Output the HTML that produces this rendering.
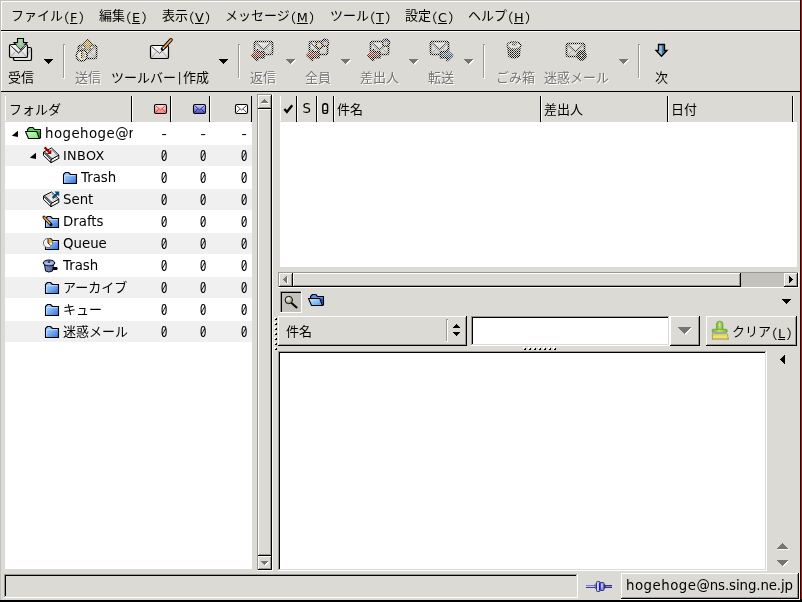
<!DOCTYPE html>
<html lang="ja"><head><meta charset="utf-8"><title>Sylpheed</title>
<style>
html,body{margin:0;padding:0;}
body{width:802px;height:602px;position:relative;overflow:hidden;background:#dcdad5;font-family:"DejaVu Sans","Liberation Sans","Noto Sans CJK JP",sans-serif;font-size:12.8px;letter-spacing:.35px;color:#000;}
#w{position:absolute;left:0;top:0;width:802px;height:602px;will-change:transform;}
.a{position:absolute;}
.t{position:absolute;white-space:nowrap;line-height:18px;height:18px;}
.j{font-family:"Noto Sans CJK JP","IPAGothic",sans-serif;font-size:13px;letter-spacing:0;}
.p{font-family:"IPAGothic","Noto Sans CJK JP",sans-serif;font-size:13.6px;letter-spacing:0;display:inline-block;width:7px;text-align:center;position:relative;top:2.5px;}
.q{padding-left:.8px;width:6.2px;}
.b{font-family:"IPAGothic","Noto Sans CJK JP",sans-serif;font-size:12.5px;letter-spacing:0;display:inline-block;width:7px;text-align:center;position:relative;top:1px;}
.k{position:relative;top:2px;letter-spacing:0;}
.lc{font-size:13.33px;letter-spacing:0;}
.z{font-family:"WenQuanYi Zen Hei Mono","IPAGothic","DejaVu Sans Mono",monospace;font-size:13.5px;letter-spacing:0;}
.dis{color:#757575;text-shadow:1px 1px 0 #fff;}
u{text-decoration:underline;text-underline-offset:1px;}
svg{position:absolute;left:0;top:0;overflow:visible;}
</style></head><body><div id="w">
<div class="a" style="left:0px;top:0px;width:800px;height:1px;background:#c0c0c0;"></div>
<div class="a" style="left:0px;top:0px;width:1px;height:600px;background:#c0c0c0;"></div>
<div class="a" style="left:1px;top:1px;width:799px;height:1px;background:#ffffff;"></div>
<div class="a" style="left:1px;top:1px;width:1px;height:90px;background:#ffffff;"></div>
<div class="a" style="left:800px;top:0px;width:1px;height:602px;background:#000000;"></div>
<div class="a" style="left:801px;top:0px;width:1px;height:599px;background:#e00000;"></div>
<div class="a" style="left:0px;top:600px;width:802px;height:2px;background:#000000;"></div>
<div class="a" style="left:801px;top:599px;width:1px;height:3px;background:#000000;"></div>
<div class="a" style="left:1px;top:30px;width:799px;height:1px;background:#000000;"></div>
<div class="a" style="left:1px;top:31px;width:799px;height:1px;background:#ffffff;"></div>
<div class="t " style="left:11px;top:6px;"><span class="j">ファイル</span><span class="p">(</span><u class="k">F</u><span class="p q">)</span></div>
<div class="t " style="left:99px;top:6px;"><span class="j">編集</span><span class="p">(</span><u class="k">E</u><span class="p q">)</span></div>
<div class="t " style="left:162px;top:6px;"><span class="j">表示</span><span class="p">(</span><u class="k">V</u><span class="p q">)</span></div>
<div class="t " style="left:225px;top:6px;"><span class="j">メッセージ</span><span class="p">(</span><u class="k">M</u><span class="p q">)</span></div>
<div class="t " style="left:330px;top:6px;"><span class="j">ツール</span><span class="p">(</span><u class="k">T</u><span class="p q">)</span></div>
<div class="t " style="left:405px;top:6px;"><span class="j">設定</span><span class="p">(</span><u class="k">C</u><span class="p q">)</span></div>
<div class="t " style="left:468px;top:6px;"><span class="j">ヘルプ</span><span class="p">(</span><u class="k">H</u><span class="p q">)</span></div>
<div class="a" style="left:1px;top:91px;width:799px;height:1px;background:#000000;"></div>
<div class="t " style="left:8px;top:68px;"><span class="j">受信</span></div>
<div class="t dis" style="left:75px;top:68px;"><span class="j">送信</span></div>
<div class="t " style="left:111px;top:68px;"><span class="j">ツールバー</span><span class="b">|</span><span class="j">作成</span></div>
<div class="t dis" style="left:250px;top:68px;"><span class="j">返信</span></div>
<div class="t dis" style="left:305px;top:68px;"><span class="j">全員</span></div>
<div class="t dis" style="left:360px;top:68px;"><span class="j">差出人</span></div>
<div class="t dis" style="left:428px;top:68px;"><span class="j">転送</span></div>
<div class="t dis" style="left:496px;top:68px;"><span class="j">ごみ箱</span></div>
<div class="t dis" style="left:544px;top:68px;"><span class="j">迷惑メール</span></div>
<div class="t " style="left:655px;top:68px;"><span class="j">次</span></div>
<div class="a" style="left:63px;top:44px;width:1px;height:34px;background:#9a9890;"></div>
<div class="a" style="left:64px;top:44px;width:1px;height:1px;background:#9a9890;"></div>
<div class="a" style="left:64px;top:45px;width:1px;height:34px;background:#ffffff;"></div>
<div class="a" style="left:63px;top:78px;width:1px;height:1px;background:#ffffff;"></div>
<div class="a" style="left:238px;top:44px;width:1px;height:34px;background:#9a9890;"></div>
<div class="a" style="left:239px;top:44px;width:1px;height:1px;background:#9a9890;"></div>
<div class="a" style="left:239px;top:45px;width:1px;height:34px;background:#ffffff;"></div>
<div class="a" style="left:238px;top:78px;width:1px;height:1px;background:#ffffff;"></div>
<div class="a" style="left:483px;top:44px;width:1px;height:34px;background:#9a9890;"></div>
<div class="a" style="left:484px;top:44px;width:1px;height:1px;background:#9a9890;"></div>
<div class="a" style="left:484px;top:45px;width:1px;height:34px;background:#ffffff;"></div>
<div class="a" style="left:483px;top:78px;width:1px;height:1px;background:#ffffff;"></div>
<div class="a" style="left:638px;top:44px;width:1px;height:34px;background:#9a9890;"></div>
<div class="a" style="left:639px;top:44px;width:1px;height:1px;background:#9a9890;"></div>
<div class="a" style="left:639px;top:45px;width:1px;height:34px;background:#ffffff;"></div>
<div class="a" style="left:638px;top:78px;width:1px;height:1px;background:#ffffff;"></div>
<div class="a" style="left:5px;top:122px;width:247px;height:447px;background:#ffffff;"></div>
<div class="a" style="left:5px;top:96px;width:1px;height:25px;background:#ffffff;"></div>
<div class="a" style="left:131px;top:96px;width:1px;height:26px;background:#000000;"></div>
<div class="a" style="left:132px;top:96px;width:1px;height:25px;background:#ffffff;"></div>
<div class="a" style="left:170px;top:96px;width:1px;height:26px;background:#000000;"></div>
<div class="a" style="left:171px;top:96px;width:1px;height:25px;background:#ffffff;"></div>
<div class="a" style="left:209px;top:96px;width:1px;height:26px;background:#000000;"></div>
<div class="a" style="left:210px;top:96px;width:1px;height:25px;background:#ffffff;"></div>
<div class="a" style="left:251px;top:96px;width:1px;height:26px;background:#000000;"></div>
<div class="t " style="left:9px;top:99.5px;"><span class="j">フォルダ</span></div>

<div class="t " style="left:45px;top:125px;max-width:88px;overflow:hidden"><span class="lc"><span style="letter-spacing:.45px">hogehoge</span>@r</span></div>
<div class="t z" style="left:147.6px;top:125.6px;width:20px;text-align:right">-</div>
<div class="t z" style="left:186.6px;top:125.6px;width:20px;text-align:right">-</div>
<div class="t z" style="left:227.6px;top:125.6px;width:20px;text-align:right">-</div>
<div class="a" style="left:5px;top:145px;width:247px;height:21px;background:#f0f0f0;"></div>

<div class="t " style="left:63px;top:147px;max-width:70px;overflow:hidden">INBOX</div>
<div class="t z" style="left:147.6px;top:147.6px;width:20px;text-align:right">0</div>
<div class="t z" style="left:186.6px;top:147.6px;width:20px;text-align:right">0</div>
<div class="t z" style="left:227.6px;top:147.6px;width:20px;text-align:right">0</div>

<div class="t " style="left:81px;top:169px;max-width:52px;overflow:hidden"><span class="lc">Trash</span></div>
<div class="t z" style="left:147.6px;top:169.6px;width:20px;text-align:right">0</div>
<div class="t z" style="left:186.6px;top:169.6px;width:20px;text-align:right">0</div>
<div class="t z" style="left:227.6px;top:169.6px;width:20px;text-align:right">0</div>
<div class="a" style="left:5px;top:189px;width:247px;height:21px;background:#f0f0f0;"></div>

<div class="t " style="left:63px;top:191px;max-width:70px;overflow:hidden"><span class="lc">Sent</span></div>
<div class="t z" style="left:147.6px;top:191.6px;width:20px;text-align:right">0</div>
<div class="t z" style="left:186.6px;top:191.6px;width:20px;text-align:right">0</div>
<div class="t z" style="left:227.6px;top:191.6px;width:20px;text-align:right">0</div>

<div class="t " style="left:63px;top:213px;max-width:70px;overflow:hidden"><span class="lc">Drafts</span></div>
<div class="t z" style="left:147.6px;top:213.6px;width:20px;text-align:right">0</div>
<div class="t z" style="left:186.6px;top:213.6px;width:20px;text-align:right">0</div>
<div class="t z" style="left:227.6px;top:213.6px;width:20px;text-align:right">0</div>
<div class="a" style="left:5px;top:233px;width:247px;height:21px;background:#f0f0f0;"></div>

<div class="t " style="left:63px;top:235px;max-width:70px;overflow:hidden"><span class="lc">Queue</span></div>
<div class="t z" style="left:147.6px;top:235.6px;width:20px;text-align:right">0</div>
<div class="t z" style="left:186.6px;top:235.6px;width:20px;text-align:right">0</div>
<div class="t z" style="left:227.6px;top:235.6px;width:20px;text-align:right">0</div>

<div class="t " style="left:63px;top:257px;max-width:70px;overflow:hidden"><span class="lc">Trash</span></div>
<div class="t z" style="left:147.6px;top:257.6px;width:20px;text-align:right">0</div>
<div class="t z" style="left:186.6px;top:257.6px;width:20px;text-align:right">0</div>
<div class="t z" style="left:227.6px;top:257.6px;width:20px;text-align:right">0</div>
<div class="a" style="left:5px;top:277px;width:247px;height:21px;background:#f0f0f0;"></div>

<div class="t " style="left:63px;top:278px;max-width:70px;overflow:hidden"><span class="j">アーカイブ</span></div>
<div class="t z" style="left:147.6px;top:279.6px;width:20px;text-align:right">0</div>
<div class="t z" style="left:186.6px;top:279.6px;width:20px;text-align:right">0</div>
<div class="t z" style="left:227.6px;top:279.6px;width:20px;text-align:right">0</div>

<div class="t " style="left:63px;top:300px;max-width:70px;overflow:hidden"><span class="j">キュー</span></div>
<div class="t z" style="left:147.6px;top:301.6px;width:20px;text-align:right">0</div>
<div class="t z" style="left:186.6px;top:301.6px;width:20px;text-align:right">0</div>
<div class="t z" style="left:227.6px;top:301.6px;width:20px;text-align:right">0</div>
<div class="a" style="left:5px;top:321px;width:247px;height:21px;background:#f0f0f0;"></div>

<div class="t " style="left:63px;top:322px;max-width:70px;overflow:hidden"><span class="j">迷惑メール</span></div>
<div class="t z" style="left:147.6px;top:323.6px;width:20px;text-align:right">0</div>
<div class="t z" style="left:186.6px;top:323.6px;width:20px;text-align:right">0</div>
<div class="t z" style="left:227.6px;top:323.6px;width:20px;text-align:right">0</div>
<div class="a" style="left:257px;top:94px;width:16px;height:477px;background:#c4c2bd;"></div>
<div class="a" style="left:257px;top:94px;width:16px;height:1px;background:#9a9890;"></div>
<div class="a" style="left:257px;top:94px;width:1px;height:477px;background:#9a9890;"></div>
<div class="a" style="left:272px;top:94px;width:1px;height:477px;background:#ffffff;"></div>
<div class="a" style="left:257px;top:570px;width:16px;height:1px;background:#ffffff;"></div>
<div class="a" style="left:258px;top:95px;width:14px;height:14px;background:#dcdad5;"></div>
<div class="a" style="left:258px;top:95px;width:14px;height:1px;background:#ffffff;"></div>
<div class="a" style="left:258px;top:95px;width:1px;height:14px;background:#ffffff;"></div>
<div class="a" style="left:259px;top:107px;width:12px;height:1px;background:#9a9890;"></div>
<div class="a" style="left:270px;top:96px;width:1px;height:12px;background:#9a9890;"></div>
<div class="a" style="left:258px;top:108px;width:14px;height:1px;background:#000000;"></div>
<div class="a" style="left:271px;top:95px;width:1px;height:14px;background:#000000;"></div>
<div class="a" style="left:258px;top:556px;width:14px;height:14px;background:#dcdad5;"></div>
<div class="a" style="left:258px;top:556px;width:14px;height:1px;background:#ffffff;"></div>
<div class="a" style="left:258px;top:556px;width:1px;height:14px;background:#ffffff;"></div>
<div class="a" style="left:259px;top:568px;width:12px;height:1px;background:#9a9890;"></div>
<div class="a" style="left:270px;top:557px;width:1px;height:12px;background:#9a9890;"></div>
<div class="a" style="left:258px;top:569px;width:14px;height:1px;background:#000000;"></div>
<div class="a" style="left:271px;top:556px;width:1px;height:14px;background:#000000;"></div>
<div class="a" style="left:258px;top:109px;width:14px;height:447px;background:#dcdad5;"></div>
<div class="a" style="left:258px;top:109px;width:14px;height:1px;background:#ffffff;"></div>
<div class="a" style="left:258px;top:109px;width:1px;height:447px;background:#ffffff;"></div>
<div class="a" style="left:259px;top:554px;width:12px;height:1px;background:#9a9890;"></div>
<div class="a" style="left:270px;top:110px;width:1px;height:445px;background:#9a9890;"></div>
<div class="a" style="left:258px;top:555px;width:14px;height:1px;background:#000000;"></div>
<div class="a" style="left:271px;top:109px;width:1px;height:447px;background:#000000;"></div>
<div class="a" style="left:280px;top:122px;width:517px;height:145px;background:#ffffff;"></div>
<div class="a" style="left:280px;top:96px;width:1px;height:25px;background:#ffffff;"></div>
<div class="a" style="left:296px;top:96px;width:1px;height:26px;background:#000000;"></div>
<div class="a" style="left:297px;top:96px;width:1px;height:25px;background:#ffffff;"></div>
<div class="a" style="left:316px;top:96px;width:1px;height:26px;background:#000000;"></div>
<div class="a" style="left:317px;top:96px;width:1px;height:25px;background:#ffffff;"></div>
<div class="a" style="left:333px;top:96px;width:1px;height:26px;background:#000000;"></div>
<div class="a" style="left:334px;top:96px;width:1px;height:25px;background:#ffffff;"></div>
<div class="a" style="left:540px;top:96px;width:1px;height:26px;background:#000000;"></div>
<div class="a" style="left:541px;top:96px;width:1px;height:25px;background:#ffffff;"></div>
<div class="a" style="left:667px;top:96px;width:1px;height:26px;background:#000000;"></div>
<div class="a" style="left:668px;top:96px;width:1px;height:25px;background:#ffffff;"></div>
<div class="a" style="left:792px;top:96px;width:1px;height:26px;background:#000000;"></div>
<div class="a" style="left:793px;top:96px;width:1px;height:25px;background:#ffffff;"></div>
<div class="t " style="left:302.4px;top:99.7px;"><span class="lc">S</span></div>
<div class="t " style="left:337px;top:100px;"><span class="j">件名</span></div>
<div class="t " style="left:544px;top:100px;"><span class="j">差出人</span></div>
<div class="t " style="left:671px;top:100px;"><span class="j">日付</span></div>
<div class="a" style="left:278px;top:272px;width:521px;height:16px;background:#c4c2bd;"></div>
<div class="a" style="left:278px;top:272px;width:521px;height:1px;background:#9a9890;"></div>
<div class="a" style="left:278px;top:272px;width:1px;height:16px;background:#9a9890;"></div>
<div class="a" style="left:278px;top:287px;width:521px;height:1px;background:#ffffff;"></div>
<div class="a" style="left:798px;top:272px;width:1px;height:16px;background:#ffffff;"></div>
<div class="a" style="left:279px;top:273px;width:14px;height:14px;background:#dcdad5;"></div>
<div class="a" style="left:279px;top:273px;width:14px;height:1px;background:#ffffff;"></div>
<div class="a" style="left:279px;top:273px;width:1px;height:14px;background:#ffffff;"></div>
<div class="a" style="left:280px;top:285px;width:12px;height:1px;background:#9a9890;"></div>
<div class="a" style="left:291px;top:274px;width:1px;height:12px;background:#9a9890;"></div>
<div class="a" style="left:279px;top:286px;width:14px;height:1px;background:#000000;"></div>
<div class="a" style="left:292px;top:273px;width:1px;height:14px;background:#000000;"></div>
<div class="a" style="left:293px;top:273px;width:448px;height:14px;background:#dcdad5;"></div>
<div class="a" style="left:293px;top:273px;width:448px;height:1px;background:#ffffff;"></div>
<div class="a" style="left:293px;top:273px;width:1px;height:14px;background:#ffffff;"></div>
<div class="a" style="left:294px;top:285px;width:446px;height:1px;background:#9a9890;"></div>
<div class="a" style="left:739px;top:274px;width:1px;height:12px;background:#9a9890;"></div>
<div class="a" style="left:293px;top:286px;width:448px;height:1px;background:#000000;"></div>
<div class="a" style="left:740px;top:273px;width:1px;height:14px;background:#000000;"></div>
<div class="a" style="left:784px;top:273px;width:14px;height:14px;background:#dcdad5;"></div>
<div class="a" style="left:784px;top:273px;width:14px;height:1px;background:#ffffff;"></div>
<div class="a" style="left:784px;top:273px;width:1px;height:14px;background:#ffffff;"></div>
<div class="a" style="left:785px;top:285px;width:12px;height:1px;background:#9a9890;"></div>
<div class="a" style="left:796px;top:274px;width:1px;height:12px;background:#9a9890;"></div>
<div class="a" style="left:784px;top:286px;width:14px;height:1px;background:#000000;"></div>
<div class="a" style="left:797px;top:273px;width:1px;height:14px;background:#000000;"></div>
<div class="a" style="left:280px;top:291px;width:22px;height:22px;background:#c4c2bd;"></div>
<div class="a" style="left:280px;top:291px;width:21px;height:1px;background:#9a9890;"></div>
<div class="a" style="left:280px;top:291px;width:1px;height:21px;background:#9a9890;"></div>
<div class="a" style="left:281px;top:292px;width:20px;height:1px;background:#000000;"></div>
<div class="a" style="left:281px;top:292px;width:1px;height:20px;background:#000000;"></div>
<div class="a" style="left:280px;top:312px;width:22px;height:1px;background:#ffffff;"></div>
<div class="a" style="left:301px;top:291px;width:1px;height:22px;background:#ffffff;"></div>
<div class="a" style="left:278px;top:316px;width:189px;height:1px;background:#ffffff;"></div>
<div class="a" style="left:278px;top:316px;width:1px;height:30px;background:#ffffff;"></div>
<div class="a" style="left:279px;top:344px;width:187px;height:1px;background:#9a9890;"></div>
<div class="a" style="left:465px;top:317px;width:1px;height:28px;background:#9a9890;"></div>
<div class="a" style="left:278px;top:345px;width:189px;height:1px;background:#000000;"></div>
<div class="a" style="left:466px;top:316px;width:1px;height:30px;background:#000000;"></div>
<div class="a" style="left:446px;top:319px;width:1px;height:22px;background:#9a9890;"></div>
<div class="a" style="left:447px;top:319px;width:1px;height:1px;background:#9a9890;"></div>
<div class="a" style="left:447px;top:320px;width:1px;height:22px;background:#ffffff;"></div>
<div class="a" style="left:446px;top:341px;width:1px;height:1px;background:#ffffff;"></div>
<div class="t " style="left:286px;top:322px;"><span class="j">件名</span></div>
<div class="a" style="left:473px;top:318px;width:195px;height:26px;background:#ffffff;"></div>
<div class="a" style="left:471px;top:345px;width:199px;height:1px;background:#ffffff;"></div>
<div class="a" style="left:669px;top:316px;width:1px;height:30px;background:#ffffff;"></div>
<div class="a" style="left:471px;top:316px;width:198px;height:1px;background:#9a9890;"></div>
<div class="a" style="left:471px;top:316px;width:1px;height:29px;background:#9a9890;"></div>
<div class="a" style="left:472px;top:317px;width:196px;height:1px;background:#000000;"></div>
<div class="a" style="left:472px;top:317px;width:1px;height:27px;background:#000000;"></div>
<div class="a" style="left:670px;top:316px;width:30px;height:1px;background:#ffffff;"></div>
<div class="a" style="left:670px;top:316px;width:1px;height:30px;background:#ffffff;"></div>
<div class="a" style="left:671px;top:344px;width:28px;height:1px;background:#9a9890;"></div>
<div class="a" style="left:698px;top:317px;width:1px;height:28px;background:#9a9890;"></div>
<div class="a" style="left:670px;top:345px;width:30px;height:1px;background:#000000;"></div>
<div class="a" style="left:699px;top:316px;width:1px;height:30px;background:#000000;"></div>
<div class="a" style="left:706px;top:316px;width:91px;height:1px;background:#ffffff;"></div>
<div class="a" style="left:706px;top:316px;width:1px;height:30px;background:#ffffff;"></div>
<div class="a" style="left:707px;top:344px;width:89px;height:1px;background:#9a9890;"></div>
<div class="a" style="left:795px;top:317px;width:1px;height:28px;background:#9a9890;"></div>
<div class="a" style="left:706px;top:345px;width:91px;height:1px;background:#000000;"></div>
<div class="a" style="left:796px;top:316px;width:1px;height:30px;background:#000000;"></div>
<div class="t " style="left:732px;top:322px;"><span class="j">クリア</span><span class="p">(</span><u class="k">L</u><span class="p q">)</span></div>
<div class="a" style="left:280px;top:353px;width:485px;height:216px;background:#ffffff;"></div>
<div class="a" style="left:278px;top:570px;width:489px;height:1px;background:#ffffff;"></div>
<div class="a" style="left:766px;top:351px;width:1px;height:220px;background:#ffffff;"></div>
<div class="a" style="left:278px;top:351px;width:488px;height:1px;background:#9a9890;"></div>
<div class="a" style="left:278px;top:351px;width:1px;height:219px;background:#9a9890;"></div>
<div class="a" style="left:279px;top:352px;width:486px;height:1px;background:#000000;"></div>
<div class="a" style="left:279px;top:352px;width:1px;height:217px;background:#000000;"></div>
<div class="a" style="left:4px;top:597px;width:574px;height:1px;background:#ffffff;"></div>
<div class="a" style="left:577px;top:574px;width:1px;height:24px;background:#ffffff;"></div>
<div class="a" style="left:4px;top:574px;width:573px;height:1px;background:#9a9890;"></div>
<div class="a" style="left:4px;top:574px;width:1px;height:23px;background:#9a9890;"></div>
<div class="a" style="left:5px;top:575px;width:571px;height:1px;background:#000000;"></div>
<div class="a" style="left:5px;top:575px;width:1px;height:21px;background:#000000;"></div>
<div class="a" style="left:621px;top:573px;width:178px;height:1px;background:#ffffff;"></div>
<div class="a" style="left:621px;top:573px;width:1px;height:26px;background:#ffffff;"></div>
<div class="a" style="left:622px;top:597px;width:176px;height:1px;background:#9a9890;"></div>
<div class="a" style="left:797px;top:574px;width:1px;height:24px;background:#9a9890;"></div>
<div class="a" style="left:621px;top:598px;width:178px;height:1px;background:#000000;"></div>
<div class="a" style="left:798px;top:573px;width:1px;height:26px;background:#000000;"></div>
<div class="a" style="left:620px;top:599px;width:180px;height:1px;background:#ffffff;"></div>
<div class="a" style="left:799px;top:573px;width:1px;height:27px;background:#ffffff;"></div>
<div class="t " style="left:626px;top:577px;"><span class="lc"><span style="letter-spacing:.5px">hogehoge</span><span style="letter-spacing:-.1px">@ns.sing.ne.jp</span></span></div>
<svg width="802" height="602" viewBox="0 0 802 602" shape-rendering="crispEdges">
<rect x="44" y="59" width="9" height="1" fill="#000000"/><rect x="45" y="60" width="7" height="1" fill="#000000"/><rect x="46" y="61" width="5" height="1" fill="#000000"/><rect x="47" y="62" width="3" height="1" fill="#000000"/><rect x="48" y="63" width="1" height="1" fill="#000000"/><rect x="219" y="59" width="9" height="1" fill="#000000"/><rect x="220" y="60" width="7" height="1" fill="#000000"/><rect x="221" y="61" width="5" height="1" fill="#000000"/><rect x="222" y="62" width="3" height="1" fill="#000000"/><rect x="223" y="63" width="1" height="1" fill="#000000"/><rect x="287" y="60" width="9" height="1" fill="#fff"/><rect x="288" y="61" width="7" height="1" fill="#fff"/><rect x="289" y="62" width="5" height="1" fill="#fff"/><rect x="290" y="63" width="3" height="1" fill="#fff"/><rect x="291" y="64" width="1" height="1" fill="#fff"/><rect x="286" y="59" width="9" height="1" fill="#757575"/><rect x="287" y="60" width="7" height="1" fill="#757575"/><rect x="288" y="61" width="5" height="1" fill="#757575"/><rect x="289" y="62" width="3" height="1" fill="#757575"/><rect x="290" y="63" width="1" height="1" fill="#757575"/><rect x="342" y="60" width="9" height="1" fill="#fff"/><rect x="343" y="61" width="7" height="1" fill="#fff"/><rect x="344" y="62" width="5" height="1" fill="#fff"/><rect x="345" y="63" width="3" height="1" fill="#fff"/><rect x="346" y="64" width="1" height="1" fill="#fff"/><rect x="341" y="59" width="9" height="1" fill="#757575"/><rect x="342" y="60" width="7" height="1" fill="#757575"/><rect x="343" y="61" width="5" height="1" fill="#757575"/><rect x="344" y="62" width="3" height="1" fill="#757575"/><rect x="345" y="63" width="1" height="1" fill="#757575"/><rect x="410" y="60" width="9" height="1" fill="#fff"/><rect x="411" y="61" width="7" height="1" fill="#fff"/><rect x="412" y="62" width="5" height="1" fill="#fff"/><rect x="413" y="63" width="3" height="1" fill="#fff"/><rect x="414" y="64" width="1" height="1" fill="#fff"/><rect x="409" y="59" width="9" height="1" fill="#757575"/><rect x="410" y="60" width="7" height="1" fill="#757575"/><rect x="411" y="61" width="5" height="1" fill="#757575"/><rect x="412" y="62" width="3" height="1" fill="#757575"/><rect x="413" y="63" width="1" height="1" fill="#757575"/><rect x="465" y="60" width="9" height="1" fill="#fff"/><rect x="466" y="61" width="7" height="1" fill="#fff"/><rect x="467" y="62" width="5" height="1" fill="#fff"/><rect x="468" y="63" width="3" height="1" fill="#fff"/><rect x="469" y="64" width="1" height="1" fill="#fff"/><rect x="464" y="59" width="9" height="1" fill="#757575"/><rect x="465" y="60" width="7" height="1" fill="#757575"/><rect x="466" y="61" width="5" height="1" fill="#757575"/><rect x="467" y="62" width="3" height="1" fill="#757575"/><rect x="468" y="63" width="1" height="1" fill="#757575"/><rect x="620" y="60" width="9" height="1" fill="#fff"/><rect x="621" y="61" width="7" height="1" fill="#fff"/><rect x="622" y="62" width="5" height="1" fill="#fff"/><rect x="623" y="63" width="3" height="1" fill="#fff"/><rect x="624" y="64" width="1" height="1" fill="#fff"/><rect x="619" y="59" width="9" height="1" fill="#757575"/><rect x="620" y="60" width="7" height="1" fill="#757575"/><rect x="621" y="61" width="5" height="1" fill="#757575"/><rect x="622" y="62" width="3" height="1" fill="#757575"/><rect x="623" y="63" width="1" height="1" fill="#757575"/><rect x="265" y="100" width="1" height="1" fill="#fff"/><rect x="264" y="101" width="3" height="1" fill="#fff"/><rect x="263" y="102" width="5" height="1" fill="#fff"/><rect x="262" y="103" width="7" height="1" fill="#fff"/><rect x="264" y="99" width="1" height="1" fill="#757575"/><rect x="263" y="100" width="3" height="1" fill="#757575"/><rect x="262" y="101" width="5" height="1" fill="#757575"/><rect x="261" y="102" width="7" height="1" fill="#757575"/><rect x="262" y="562" width="7" height="1" fill="#fff"/><rect x="263" y="563" width="5" height="1" fill="#fff"/><rect x="264" y="564" width="3" height="1" fill="#fff"/><rect x="265" y="565" width="1" height="1" fill="#fff"/><rect x="261" y="561" width="7" height="1" fill="#757575"/><rect x="262" y="562" width="5" height="1" fill="#757575"/><rect x="263" y="563" width="3" height="1" fill="#757575"/><rect x="264" y="564" width="1" height="1" fill="#757575"/><rect x="274" y="317" width="1" height="1" fill="#fff"/><rect x="275" y="317" width="1" height="1" fill="#fff"/><rect x="274" y="318" width="1" height="1" fill="#fff"/><rect x="275" y="319" width="1" height="1" fill="#000"/><rect x="276" y="318" width="1" height="1" fill="#000"/><rect x="276" y="319" width="1" height="1" fill="#000"/><rect x="274" y="322" width="1" height="1" fill="#fff"/><rect x="275" y="322" width="1" height="1" fill="#fff"/><rect x="274" y="323" width="1" height="1" fill="#fff"/><rect x="275" y="324" width="1" height="1" fill="#000"/><rect x="276" y="323" width="1" height="1" fill="#000"/><rect x="276" y="324" width="1" height="1" fill="#000"/><rect x="274" y="327" width="1" height="1" fill="#fff"/><rect x="275" y="327" width="1" height="1" fill="#fff"/><rect x="274" y="328" width="1" height="1" fill="#fff"/><rect x="275" y="329" width="1" height="1" fill="#000"/><rect x="276" y="328" width="1" height="1" fill="#000"/><rect x="276" y="329" width="1" height="1" fill="#000"/><rect x="274" y="332" width="1" height="1" fill="#fff"/><rect x="275" y="332" width="1" height="1" fill="#fff"/><rect x="274" y="333" width="1" height="1" fill="#fff"/><rect x="275" y="334" width="1" height="1" fill="#000"/><rect x="276" y="333" width="1" height="1" fill="#000"/><rect x="276" y="334" width="1" height="1" fill="#000"/><rect x="274" y="337" width="1" height="1" fill="#fff"/><rect x="275" y="337" width="1" height="1" fill="#fff"/><rect x="274" y="338" width="1" height="1" fill="#fff"/><rect x="275" y="339" width="1" height="1" fill="#000"/><rect x="276" y="338" width="1" height="1" fill="#000"/><rect x="276" y="339" width="1" height="1" fill="#000"/><rect x="274" y="342" width="1" height="1" fill="#fff"/><rect x="275" y="342" width="1" height="1" fill="#fff"/><rect x="274" y="343" width="1" height="1" fill="#fff"/><rect x="275" y="344" width="1" height="1" fill="#000"/><rect x="276" y="343" width="1" height="1" fill="#000"/><rect x="276" y="344" width="1" height="1" fill="#000"/><rect x="274" y="347" width="1" height="1" fill="#fff"/><rect x="275" y="347" width="1" height="1" fill="#fff"/><rect x="274" y="348" width="1" height="1" fill="#fff"/><rect x="275" y="349" width="1" height="1" fill="#000"/><rect x="276" y="348" width="1" height="1" fill="#000"/><rect x="276" y="349" width="1" height="1" fill="#000"/><rect x="284" y="280" width="1" height="1" fill="#fff"/><rect x="285" y="279" width="1" height="3" fill="#fff"/><rect x="286" y="278" width="1" height="5" fill="#fff"/><rect x="287" y="277" width="1" height="7" fill="#fff"/><rect x="283" y="279" width="1" height="1" fill="#757575"/><rect x="284" y="278" width="1" height="3" fill="#757575"/><rect x="285" y="277" width="1" height="5" fill="#757575"/><rect x="286" y="276" width="1" height="7" fill="#757575"/><rect x="789" y="276" width="1" height="7" fill="#000000"/><rect x="790" y="277" width="1" height="5" fill="#000000"/><rect x="791" y="278" width="1" height="3" fill="#000000"/><rect x="792" y="279" width="1" height="1" fill="#000000"/><rect x="782" y="299" width="9" height="1" fill="#000000"/><rect x="783" y="300" width="7" height="1" fill="#000000"/><rect x="784" y="301" width="5" height="1" fill="#000000"/><rect x="785" y="302" width="3" height="1" fill="#000000"/><rect x="786" y="303" width="1" height="1" fill="#000000"/><rect x="456" y="324" width="1" height="1" fill="#000000"/><rect x="455" y="325" width="3" height="1" fill="#000000"/><rect x="454" y="326" width="5" height="1" fill="#000000"/><rect x="453" y="327" width="7" height="1" fill="#000000"/><rect x="453" y="332" width="7" height="1" fill="#000000"/><rect x="454" y="333" width="5" height="1" fill="#000000"/><rect x="455" y="334" width="3" height="1" fill="#000000"/><rect x="456" y="335" width="1" height="1" fill="#000000"/><rect x="679" y="328" width="13" height="1" fill="#fff"/><rect x="680" y="329" width="11" height="1" fill="#fff"/><rect x="681" y="330" width="9" height="1" fill="#fff"/><rect x="682" y="331" width="7" height="1" fill="#fff"/><rect x="683" y="332" width="5" height="1" fill="#fff"/><rect x="684" y="333" width="3" height="1" fill="#fff"/><rect x="685" y="334" width="1" height="1" fill="#fff"/><rect x="678" y="327" width="13" height="1" fill="#757575"/><rect x="679" y="328" width="11" height="1" fill="#757575"/><rect x="680" y="329" width="9" height="1" fill="#757575"/><rect x="681" y="330" width="7" height="1" fill="#757575"/><rect x="682" y="331" width="5" height="1" fill="#757575"/><rect x="683" y="332" width="3" height="1" fill="#757575"/><rect x="684" y="333" width="1" height="1" fill="#757575"/><rect x="523" y="347" width="1" height="1" fill="#fff"/><rect x="524" y="347" width="1" height="1" fill="#fff"/><rect x="523" y="348" width="1" height="1" fill="#fff"/><rect x="524" y="349" width="1" height="1" fill="#000"/><rect x="525" y="348" width="1" height="1" fill="#000"/><rect x="525" y="349" width="1" height="1" fill="#000"/><rect x="528" y="347" width="1" height="1" fill="#fff"/><rect x="529" y="347" width="1" height="1" fill="#fff"/><rect x="528" y="348" width="1" height="1" fill="#fff"/><rect x="529" y="349" width="1" height="1" fill="#000"/><rect x="530" y="348" width="1" height="1" fill="#000"/><rect x="530" y="349" width="1" height="1" fill="#000"/><rect x="533" y="347" width="1" height="1" fill="#fff"/><rect x="534" y="347" width="1" height="1" fill="#fff"/><rect x="533" y="348" width="1" height="1" fill="#fff"/><rect x="534" y="349" width="1" height="1" fill="#000"/><rect x="535" y="348" width="1" height="1" fill="#000"/><rect x="535" y="349" width="1" height="1" fill="#000"/><rect x="538" y="347" width="1" height="1" fill="#fff"/><rect x="539" y="347" width="1" height="1" fill="#fff"/><rect x="538" y="348" width="1" height="1" fill="#fff"/><rect x="539" y="349" width="1" height="1" fill="#000"/><rect x="540" y="348" width="1" height="1" fill="#000"/><rect x="540" y="349" width="1" height="1" fill="#000"/><rect x="543" y="347" width="1" height="1" fill="#fff"/><rect x="544" y="347" width="1" height="1" fill="#fff"/><rect x="543" y="348" width="1" height="1" fill="#fff"/><rect x="544" y="349" width="1" height="1" fill="#000"/><rect x="545" y="348" width="1" height="1" fill="#000"/><rect x="545" y="349" width="1" height="1" fill="#000"/><rect x="548" y="347" width="1" height="1" fill="#fff"/><rect x="549" y="347" width="1" height="1" fill="#fff"/><rect x="548" y="348" width="1" height="1" fill="#fff"/><rect x="549" y="349" width="1" height="1" fill="#000"/><rect x="550" y="348" width="1" height="1" fill="#000"/><rect x="550" y="349" width="1" height="1" fill="#000"/><rect x="553" y="347" width="1" height="1" fill="#fff"/><rect x="554" y="347" width="1" height="1" fill="#fff"/><rect x="553" y="348" width="1" height="1" fill="#fff"/><rect x="554" y="349" width="1" height="1" fill="#000"/><rect x="555" y="348" width="1" height="1" fill="#000"/><rect x="555" y="349" width="1" height="1" fill="#000"/><rect x="780" y="359" width="1" height="1" fill="#000000"/><rect x="781" y="358" width="1" height="3" fill="#000000"/><rect x="782" y="357" width="1" height="5" fill="#000000"/><rect x="783" y="356" width="1" height="7" fill="#000000"/><rect x="784" y="355" width="1" height="9" fill="#000000"/><rect x="783" y="544" width="1" height="1" fill="#fff"/><rect x="782" y="545" width="3" height="1" fill="#fff"/><rect x="781" y="546" width="5" height="1" fill="#fff"/><rect x="780" y="547" width="7" height="1" fill="#fff"/><rect x="779" y="548" width="9" height="1" fill="#fff"/><rect x="778" y="549" width="11" height="1" fill="#fff"/><rect x="782" y="543" width="1" height="1" fill="#757575"/><rect x="781" y="544" width="3" height="1" fill="#757575"/><rect x="780" y="545" width="5" height="1" fill="#757575"/><rect x="779" y="546" width="7" height="1" fill="#757575"/><rect x="778" y="547" width="9" height="1" fill="#757575"/><rect x="777" y="548" width="11" height="1" fill="#757575"/><rect x="778" y="561" width="11" height="1" fill="#fff"/><rect x="779" y="562" width="9" height="1" fill="#fff"/><rect x="780" y="563" width="7" height="1" fill="#fff"/><rect x="781" y="564" width="5" height="1" fill="#fff"/><rect x="782" y="565" width="3" height="1" fill="#fff"/><rect x="783" y="566" width="1" height="1" fill="#fff"/><rect x="777" y="560" width="11" height="1" fill="#757575"/><rect x="778" y="561" width="9" height="1" fill="#757575"/><rect x="779" y="562" width="7" height="1" fill="#757575"/><rect x="780" y="563" width="5" height="1" fill="#757575"/><rect x="781" y="564" width="3" height="1" fill="#757575"/><rect x="782" y="565" width="1" height="1" fill="#757575"/>
</svg>
<svg width="802" height="602" viewBox="0 0 802 602"><defs>
<pattern id="st" width="2" height="2" patternUnits="userSpaceOnUse"><rect x="1" y="0" width="1" height="1" fill="#dcdad5"/><rect x="0" y="1" width="1" height="1" fill="#dcdad5"/></pattern>
<linearGradient id="gEnv" x1="0" y1="0" x2="0" y2="1"><stop offset="0" stop-color="#ffffff"/><stop offset="1" stop-color="#d4d4d4"/></linearGradient>
<linearGradient id="gArr" x1="0" y1="0" x2="1" y2="0"><stop offset="0" stop-color="#7fa87f"/><stop offset="0.5" stop-color="#b4d2ac"/><stop offset="1" stop-color="#6f9a6f"/></linearGradient>
<linearGradient id="gBlue" x1="0" y1="0" x2="1" y2="1"><stop offset="0" stop-color="#b4d8ff"/><stop offset="0.5" stop-color="#78aef4"/><stop offset="1" stop-color="#2f6cd8"/></linearGradient>
<linearGradient id="gGreenF" x1="0" y1="0" x2="1" y2="1"><stop offset="0" stop-color="#d4fccc"/><stop offset="1" stop-color="#7fe074"/></linearGradient>
<linearGradient id="gNext" x1="0" y1="0" x2="1" y2="0"><stop offset="0" stop-color="#6c98c8"/><stop offset="0.3" stop-color="#a8c4e4"/><stop offset="0.52" stop-color="#88aad0"/><stop offset="0.56" stop-color="#4a78a8"/><stop offset="1" stop-color="#34608c"/></linearGradient>
<linearGradient id="gRed" x1="0" y1="0" x2="0" y2="1"><stop offset="0" stop-color="#ffe4e4"/><stop offset="1" stop-color="#f87878"/></linearGradient>
<linearGradient id="gBlu2" x1="0" y1="0" x2="0" y2="1"><stop offset="0" stop-color="#d4d4ff"/><stop offset="1" stop-color="#4444c4"/></linearGradient>
<linearGradient id="gTray" x1="0" y1="0" x2="1" y2="1"><stop offset="0" stop-color="#b8b8b8"/><stop offset="0.5" stop-color="#f4f4f4"/><stop offset="1" stop-color="#c8c8c8"/></linearGradient>
<radialGradient id="gLens" cx="0.4" cy="0.35" r="0.7"><stop offset="0" stop-color="#f4f4e4"/><stop offset="1" stop-color="#8c8c70"/></radialGradient>
<linearGradient id="gBroomG" x1="0" y1="0" x2="1" y2="0"><stop offset="0" stop-color="#7cb030"/><stop offset="0.5" stop-color="#b8e080"/><stop offset="1" stop-color="#7cb030"/></linearGradient>
<linearGradient id="gBroomY" x1="0" y1="0" x2="0" y2="1"><stop offset="0" stop-color="#d8d040"/><stop offset="0.6" stop-color="#f0e888"/><stop offset="1" stop-color="#b09018"/></linearGradient>
<linearGradient id="gCan" x1="0" y1="0" x2="1" y2="0"><stop offset="0" stop-color="#8098d8"/><stop offset="0.4" stop-color="#b0c0f0"/><stop offset="1" stop-color="#5870b8"/></linearGradient>
<linearGradient id="gRep" x1="0" y1="0" x2="0" y2="1"><stop offset="0" stop-color="#a06454"/><stop offset="0.4" stop-color="#8a382c"/><stop offset="1" stop-color="#4a0c08"/></linearGradient>
<linearGradient id="gFwd" x1="0" y1="0" x2="0" y2="1"><stop offset="0" stop-color="#8098b0"/><stop offset="0.4" stop-color="#4c6884"/><stop offset="1" stop-color="#1c3850"/></linearGradient>
<linearGradient id="gEnvD" x1="0" y1="0" x2="0" y2="1"><stop offset="0" stop-color="#f4f4f4"/><stop offset="1" stop-color="#c4c4c4"/></linearGradient>
<linearGradient id="gBlueO" x1="0" y1="0" x2="1" y2="1"><stop offset="0" stop-color="#d0e8ff"/><stop offset="0.5" stop-color="#90c0f8"/><stop offset="1" stop-color="#5090e8"/></linearGradient>
</defs><rect x="13.5" y="47.5" width="18" height="13" rx="1.6" fill="#e2e2e2" stroke="#000" stroke-width="1.2"/><path d="M26,58 L30.5,49.5" stroke="#999" stroke-width="0.7"/><rect x="9.5" y="44.5" width="18" height="13" rx="1.6" fill="url(#gEnv)" stroke="#000" stroke-width="1.2"/><path d="M10.5,57 L15.5,51.5 M26.5,57 L21.5,51.5" stroke="#888" stroke-width="0.7" fill="none"/><polygon points="17.5,38.5 23.5,38.5 23.5,42.5 27,42.5 20.5,49.5 14,42.5 17.5,42.5" fill="url(#gArr)" stroke="#000" stroke-width="1.1" stroke-linejoin="miter"/><path d="M10.5,45.5 L18.5,53 L26.5,45.5" stroke="#333" stroke-width="0.9" fill="none"/><polygon points="16,45 25,45 20.5,49" fill="#9cc49a"/><path d="M10.5,45.5 L18.5,53 L26.5,45.5" stroke="#333" stroke-width="0.9" fill="none"/><rect x="78.5" y="45.5" width="18" height="13" rx="1.6" fill="url(#gEnvD)" stroke="#000" stroke-width="1.7"/><path d="M79.5,57.5 L84.5,52 M95.5,57.5 L90.5,52" stroke="#888" stroke-width="0.7" fill="none"/><path d="M79.5,46.5 L87.5,53.32 L95.5,46.5" stroke="#444" stroke-width="0.9" fill="none"/><path d="M79.5,46.5 L87.5,54 L95.5,46.5" stroke="#505050" stroke-width="1.6" fill="none"/><polygon points="87.5,39 93.8,45.5 90.2,45.5 90.2,50 84.8,50 84.8,45.5 81.2,45.5" fill="#c09838" stroke="#3a3020" stroke-width="1.2"/><circle cx="81.7" cy="55.6" r="5.4" fill="#f4f4f4" stroke="#000" stroke-width="1.6"/><path d="M81.8,50.8 Q85,53.5 85,56.5 Q83.5,58.5 81.8,58.5 Z" fill="#c09838"/><path d="M81.6,50.5 L81.6,58.5" stroke="#222" stroke-width="1.2"/><rect x="74" y="38" width="26" height="26" fill="url(#st)" shape-rendering="crispEdges"/><rect x="150.5" y="45.5" width="18" height="13" rx="1.6" fill="url(#gEnv)" stroke="#000" stroke-width="1.2"/><path d="M151.5,57.5 L156.5,52 M167.5,57.5 L162.5,52" stroke="#888" stroke-width="0.7" fill="none"/><path d="M151.5,46.5 L159.5,53.32 L167.5,46.5" stroke="#444" stroke-width="0.9" fill="none"/><path d="M162.5,49 L171,39.8" stroke="#000" stroke-width="3.6" stroke-linecap="round"/><path d="M163,48.5 L171,39.8" stroke="#f0a050" stroke-width="1.8" stroke-linecap="round"/><path d="M162.6,47.7 L164.2,49.2" stroke="#fff" stroke-width="0.8"/><rect x="161" y="48.3" width="1.8" height="1.6" fill="#000"/><rect x="254.5" y="41.5" width="18" height="13" rx="1.6" fill="url(#gEnvD)" stroke="#000" stroke-width="1.7"/><path d="M255.5,53.5 L260.5,48 M271.5,53.5 L266.5,48" stroke="#888" stroke-width="0.7" fill="none"/><path d="M255.5,42.5 L263.5,49.32 L271.5,42.5" stroke="#444" stroke-width="0.9" fill="none"/><path d="M255.5,42.5 L263.5,50 L271.5,42.5" stroke="#505050" stroke-width="1.7" fill="none"/><polygon points="251,54.7 257.5,48.900000000000006 257.5,51.7 264,51.7 264,57.7 257.5,57.7 257.5,60.900000000000006" fill="url(#gRep)"/><path d="M257.5,48.900000000000006 L257.5,51.7 L264,51.7 L264,57.7 L257.5,57.7 L257.5,60.900000000000006" stroke="#000" stroke-width="1.5" fill="none"/><path d="M251.5,55.300000000000004 L257.5,60.900000000000006" stroke="#3a0c08" stroke-width="1.4" fill="none"/><rect x="250" y="38" width="26" height="24" fill="url(#st)" shape-rendering="crispEdges"/><rect x="309.5" y="41.5" width="18" height="13" rx="1.6" fill="url(#gEnvD)" stroke="#000" stroke-width="1.7"/><path d="M310.5,53.5 L315.5,48 M326.5,53.5 L321.5,48" stroke="#888" stroke-width="0.7" fill="none"/><path d="M310.5,42.5 L318.5,49.32 L326.5,42.5" stroke="#444" stroke-width="0.9" fill="none"/><path d="M310.5,42.5 L318.5,50 L326.5,42.5" stroke="#505050" stroke-width="1.7" fill="none"/><circle cx="319.5" cy="45" r="3.5" fill="#e4c8a4" stroke="#000" stroke-width="1.6"/><rect x="318.0" y="45" width="1" height="1" fill="#703010"/><rect x="320.3" y="45" width="1" height="1" fill="#703010"/><circle cx="325" cy="42.8" r="3.5" fill="#e4c8a4" stroke="#000" stroke-width="1.6"/><path d="M322,41.8 A3.2,3.2 0 0 1 328,41.8 Z" fill="#2040a0"/><rect x="323.5" y="42.8" width="1" height="1" fill="#703010"/><rect x="325.8" y="42.8" width="1" height="1" fill="#703010"/><polygon points="306,54.7 312.5,48.900000000000006 312.5,51.7 319,51.7 319,57.7 312.5,57.7 312.5,60.900000000000006" fill="url(#gRep)"/><path d="M312.5,48.900000000000006 L312.5,51.7 L319,51.7 L319,57.7 L312.5,57.7 L312.5,60.900000000000006" stroke="#000" stroke-width="1.5" fill="none"/><path d="M306.5,55.300000000000004 L312.5,60.900000000000006" stroke="#3a0c08" stroke-width="1.4" fill="none"/><rect x="305" y="38" width="26" height="24" fill="url(#st)" shape-rendering="crispEdges"/><rect x="370.5" y="41.5" width="18" height="13" rx="1.6" fill="url(#gEnvD)" stroke="#000" stroke-width="1.7"/><path d="M371.5,53.5 L376.5,48 M387.5,53.5 L382.5,48" stroke="#888" stroke-width="0.7" fill="none"/><path d="M371.5,42.5 L379.5,49.32 L387.5,42.5" stroke="#444" stroke-width="0.9" fill="none"/><path d="M371.5,42.5 L379.5,50 L387.5,42.5" stroke="#505050" stroke-width="1.7" fill="none"/><circle cx="386" cy="42.8" r="3.5" fill="#e4c8a4" stroke="#000" stroke-width="1.6"/><path d="M383,41.8 A3.2,3.2 0 0 1 389,41.8 Z" fill="#2040a0"/><rect x="384.5" y="42.8" width="1" height="1" fill="#703010"/><rect x="386.8" y="42.8" width="1" height="1" fill="#703010"/><polygon points="367,54.7 373.5,48.900000000000006 373.5,51.7 380,51.7 380,57.7 373.5,57.7 373.5,60.900000000000006" fill="url(#gRep)"/><path d="M373.5,48.900000000000006 L373.5,51.7 L380,51.7 L380,57.7 L373.5,57.7 L373.5,60.900000000000006" stroke="#000" stroke-width="1.5" fill="none"/><path d="M367.5,55.300000000000004 L373.5,60.900000000000006" stroke="#3a0c08" stroke-width="1.4" fill="none"/><rect x="366" y="38" width="26" height="24" fill="url(#st)" shape-rendering="crispEdges"/><rect x="430.5" y="41.5" width="18" height="13" rx="1.6" fill="url(#gEnvD)" stroke="#000" stroke-width="1.7"/><path d="M431.5,53.5 L436.5,48 M447.5,53.5 L442.5,48" stroke="#888" stroke-width="0.7" fill="none"/><path d="M431.5,42.5 L439.5,49.32 L447.5,42.5" stroke="#444" stroke-width="0.9" fill="none"/><path d="M431.5,42.5 L439.5,50 L447.5,42.5" stroke="#505050" stroke-width="1.7" fill="none"/><polygon points="453.5,54.7 447.0,48.900000000000006 447.0,51.7 440.5,51.7 440.5,57.7 447.0,57.7 447.0,60.900000000000006" fill="url(#gFwd)"/><path d="M447.0,48.900000000000006 L447.0,51.7 L440.5,51.7 L440.5,57.7 L447.0,57.7 L447.0,60.900000000000006" stroke="#000" stroke-width="1.5" fill="none"/><path d="M453.0,55.300000000000004 L447.0,60.900000000000006" stroke="#0c2030" stroke-width="1.4" fill="none"/><rect x="428" y="38" width="28" height="24" fill="url(#st)" shape-rendering="crispEdges"/><path d="M508,47 L508.6,56 Q514,59.8 519.4,56 L520,47 Z" fill="#707070" stroke="#000" stroke-width="1.3"/><path d="M510.5,50 L511,57.2 M512.7,50 L512.9,58 M515.2,50 L515.1,58 M517.5,50 L517,57.2" stroke="#000" stroke-width="1.1"/><ellipse cx="514" cy="45.6" rx="6.9" ry="3.8" fill="#e8e8e4" stroke="#000" stroke-width="1.3"/><path d="M507.8,47 Q514,51.5 520.2,47" stroke="#555" stroke-width="1.4" fill="none"/><ellipse cx="514" cy="44.4" rx="2.6" ry="1.1" fill="#444"/><rect x="506" y="40" width="18" height="20" fill="url(#st)" shape-rendering="crispEdges"/><rect x="566.5" y="43.5" width="18" height="13" rx="1.6" fill="url(#gEnvD)" stroke="#000" stroke-width="1.7"/><path d="M567.5,55.5 L572.5,50 M583.5,55.5 L578.5,50" stroke="#888" stroke-width="0.7" fill="none"/><path d="M567.5,44.5 L575.5,51.32 L583.5,44.5" stroke="#444" stroke-width="0.9" fill="none"/><path d="M567.5,44.5 L575.5,52 L583.5,44.5" stroke="#484848" stroke-width="1.6" fill="none"/><circle cx="581.5" cy="55.5" r="5.4" fill="#181818"/><rect x="581" y="55" width="1" height="1" fill="#e0b020"/><rect x="564" y="42" width="26" height="20" fill="url(#st)" shape-rendering="crispEdges"/><polygon points="658.5,44.5 664.5,44.5 664.5,50.5 667,50.5 661.5,56.3 656,50.5 658.5,50.5" fill="url(#gNext)" stroke="#000" stroke-width="1.3" stroke-linejoin="miter"/><rect x="154.5" y="104.5" width="12" height="9" rx="1.5" fill="url(#gRed)" stroke="#000" stroke-width="1.1"/><path d="M155.5,105.5 L160.5,110 L165.5,105.5 M155.5,112.5 L158.8,109 M165.5,112.5 L162.2,109" stroke="#c83838" stroke-width="0.8" fill="none"/><rect x="193.5" y="104.5" width="12" height="9" rx="1.5" fill="url(#gBlu2)" stroke="#000" stroke-width="1.1"/><path d="M194.5,105.5 L199.5,110 L204.5,105.5 M194.5,112.5 L197.8,109 M204.5,112.5 L201.2,109" stroke="#181878" stroke-width="0.8" fill="none"/><rect x="235.5" y="104.5" width="12" height="9" rx="1.5" fill="#ffffff" stroke="#000" stroke-width="1.1"/><path d="M236.5,105.5 L241.5,110 L246.5,105.5 M236.5,112.5 L239.8,109 M246.5,112.5 L243.2,109" stroke="#202020" stroke-width="0.8" fill="none"/><path d="M284.4,108.9 L286.9,111.9 L292.2,105.2" stroke="#000" stroke-width="2.3" fill="none" stroke-linejoin="miter"/><rect x="322.8" y="103.8" width="4.8" height="9.6" rx="2.2" fill="#dcdad5" stroke="#000" stroke-width="1.4"/><path d="M324.5,105.5 L324.5,110" stroke="#fff" stroke-width="1"/><path d="M323.5,110.5 L327,110.5" stroke="#000" stroke-width="1"/><path d="M291.5,303 L296.6,307.4" stroke="#000" stroke-width="2" stroke-linecap="round"/><circle cx="288.8" cy="300" r="3.7" fill="url(#gLens)" stroke="#111" stroke-width="1"/><path d="M310.5,299 L310.5,296.5 L312.5,294.5 L316,294.5 L317.5,296.5 L323.5,296.5 L323.5,305 L321,305.5 Z" fill="#4c90f0" stroke="#000" stroke-width="1.1" stroke-linejoin="round"/><path d="M320,298.5 L323,298.5 L323,304.5 Z" fill="#1c50b0"/><polygon points="308.5,298.5 319.7,298.5 322.5,305.5 311.5,305.5" fill="url(#gBlueO)" stroke="#000" stroke-width="1.1" stroke-linejoin="round"/><path d="M716.5,330 L716.5,324.5 A3.2,3.4 0 0 1 722.9,324.5 L722.9,330 Z" fill="url(#gBroomG)" stroke="#6c9c28" stroke-width="0.8"/><circle cx="719.6" cy="325" r="0.9" fill="#d0f0a0"/><rect x="712.2" y="329.2" width="15" height="3.3" rx="1" fill="url(#gBroomG)" stroke="#6c9c28" stroke-width="0.7"/><rect x="712.2" y="332.2" width="15" height="2.1" fill="#a4a8a8"/><path d="M712.2,334.2 L727.2,334.2 L728.6,339.5 L712.2,339.5 Z" fill="url(#gBroomY)"/><path d="M712.4,334.2 L712.4,339.4 M727.4,334.2 L728.4,339.4" stroke="#b09018" stroke-width="0.8"/><rect x="586" y="585" width="10" height="1" fill="#7878d8"/><rect x="586" y="586" width="10" height="1" fill="#c4c4ff"/><rect x="586" y="587" width="10" height="1" fill="#40408c"/><rect x="605" y="585" width="7" height="1" fill="#30307c"/><rect x="605" y="586" width="7" height="1" fill="#9090e4"/><rect x="605" y="587" width="7" height="1" fill="#30307c"/><path d="M595,584.5 L596.5,583 L596.5,589.5 L595,588 Z" fill="#8888d8" stroke="#30306c" stroke-width="0.6"/><rect x="596.5" y="581.5" width="3.5" height="10" rx="1" fill="#b4b4f4" stroke="#30306c" stroke-width="0.9"/><rect x="597.3" y="582.6" width="1.2" height="7.5" fill="#e0e0ff"/><rect x="600" y="582.5" width="4" height="8" rx="0.8" fill="#8c8ce0" stroke="#30306c" stroke-width="0.9"/><rect x="601" y="583.6" width="1.6" height="4" fill="#c4c4f8"/><rect x="599.2" y="583" width="1.1" height="7.4" fill="#0000ff"/><path d="M604,584 L605.6,585 L605.6,588 L604,589 Z" fill="#30306c"/><polygon points="18,130.8 18,137 11.8,135.8" fill="#000"/><polygon points="36,152.8 36,159 29.8,157.8" fill="#000"/><path d="M27.5,132 L27.5,129.5 L29.5,127.5 L33,127.5 L34.5,129.5 L40.5,129.5 L40.5,138 L38,138.5 Z" fill="#52d852" stroke="#000" stroke-width="1.1" stroke-linejoin="round"/><path d="M37,131.5 L40,131.5 L40,137.5 Z" fill="#2c9c2c"/><polygon points="25.5,131.5 36.7,131.5 39.5,138.5 28.5,138.5" fill="url(#gGreenF)" stroke="#000" stroke-width="1.1" stroke-linejoin="round"/><polygon points="43.5,152 51,159.5 51,162.7 43.5,155.4" fill="#fff" stroke="#000" stroke-width="1"/><polygon points="51,159.5 58.8,155 58.8,158.4 51,162.7" fill="#f8f8f8" stroke="#000" stroke-width="1"/><polygon points="43.5,152 51,159.5 58.8,155 51.5,148" fill="#fff" stroke="#000" stroke-width="1"/><polygon points="46,151.8 52.6,158 57,155.3 51.2,149.6" fill="url(#gTray)"/><path d="M45.3,152.2 L52, 158.6" stroke="#000" stroke-width="0.9"/><path d="M51.7,149.9 L57.6,155.6" stroke="#666" stroke-width="0.7"/><path d="M44.6,147.4 L49,151.8" stroke="#a00000" stroke-width="2.2"/><polygon points="46.8,154 51.3,154 51.3,149.5" fill="#a00000"/><path d="M63.5,183.5 L63.5,174.5 L65.5,172.5 L68.5,172.5 L70.5,174.5 L76.5,174.5 L76.5,183.5 Z" fill="url(#gBlue)" stroke="#000" stroke-width="1.1" stroke-linejoin="round"/><path d="M64.6,182.5 L64.6,175.6 L75.5,175.6" stroke="#d4e8ff" stroke-width="0.8" fill="none" opacity="0.9"/><polygon points="43.5,196 51,203.5 51,206.7 43.5,199.4" fill="#fff" stroke="#000" stroke-width="1"/><polygon points="51,203.5 58.8,199 58.8,202.4 51,206.7" fill="#f8f8f8" stroke="#000" stroke-width="1"/><polygon points="43.5,196 51,203.5 58.8,199 51.5,192" fill="#fff" stroke="#000" stroke-width="1"/><polygon points="46,195.8 52.6,202 57,199.3 51.2,193.6" fill="url(#gTray)"/><path d="M45.3,196.2 L52, 202.6" stroke="#000" stroke-width="0.9"/><path d="M51.7,193.9 L57.6,199.6" stroke="#666" stroke-width="0.7"/><path d="M52.6,198.2 L57.5,193.4" stroke="#00507c" stroke-width="2.4"/><polygon points="54.4,191.6 59.2,191.6 59.2,196.4" fill="#00507c"/><path d="M45.5,227.5 L45.5,218.5 L47.5,216.5 L50.5,216.5 L52.5,218.5 L58.5,218.5 L58.5,227.5 Z" fill="url(#gBlue)" stroke="#000" stroke-width="1.1" stroke-linejoin="round"/><path d="M46.6,226.5 L46.6,219.6 L57.5,219.6" stroke="#d4e8ff" stroke-width="0.8" fill="none" opacity="0.9"/><path d="M44,217.2 L51,224.6" stroke="#000" stroke-width="3" stroke-linecap="round"/><path d="M44.2,217.4 L50,223.6" stroke="#e8a050" stroke-width="1.6" stroke-linecap="round"/><path d="M50.2,223.8 L51.6,225.2" stroke="#000" stroke-width="1.6"/><path d="M45.5,249.5 L45.5,240.5 L47.5,238.5 L50.5,238.5 L52.5,240.5 L58.5,240.5 L58.5,249.5 Z" fill="url(#gBlue)" stroke="#000" stroke-width="1.1" stroke-linejoin="round"/><path d="M46.6,248.5 L46.6,241.6 L57.5,241.6" stroke="#d4e8ff" stroke-width="0.8" fill="none" opacity="0.9"/><circle cx="48" cy="243" r="4.6" fill="#f4f4f4" stroke="#707070" stroke-width="1"/><path d="M48,243 L48,238.8 A4.2,4.2 0 0 1 52.2,243 Z" fill="#f0b030"/><path d="M48,239 L48,243 L50.6,245.2" stroke="#000" stroke-width="0.9" fill="none"/><path d="M53,267 L57,267 Q58.5,268.5 57,270 L53,270 Z" fill="#000"/><path d="M44.5,264 L45.5,271 Q49,273 52.5,271 L53.5,264 Z" fill="url(#gCan)" stroke="#000" stroke-width="1"/><path d="M47,266.5 L47.2,271.4 M49,266.5 L49,271.8 M51,266.5 L50.8,271.4" stroke="#283868" stroke-width="0.8"/><ellipse cx="49" cy="263" rx="5.8" ry="3" fill="#8aa0e0" stroke="#000" stroke-width="1"/><path d="M45,263 Q49,265 53,262.6" stroke="#c4d0f4" stroke-width="0.9" fill="none"/><ellipse cx="49" cy="262" rx="1.4" ry="0.8" fill="#101828"/><path d="M45.5,293.5 L45.5,284.5 L47.5,282.5 L50.5,282.5 L52.5,284.5 L58.5,284.5 L58.5,293.5 Z" fill="url(#gBlue)" stroke="#000" stroke-width="1.1" stroke-linejoin="round"/><path d="M46.6,292.5 L46.6,285.6 L57.5,285.6" stroke="#d4e8ff" stroke-width="0.8" fill="none" opacity="0.9"/><path d="M45.5,315.5 L45.5,306.5 L47.5,304.5 L50.5,304.5 L52.5,306.5 L58.5,306.5 L58.5,315.5 Z" fill="url(#gBlue)" stroke="#000" stroke-width="1.1" stroke-linejoin="round"/><path d="M46.6,314.5 L46.6,307.6 L57.5,307.6" stroke="#d4e8ff" stroke-width="0.8" fill="none" opacity="0.9"/><path d="M45.5,337.5 L45.5,328.5 L47.5,326.5 L50.5,326.5 L52.5,328.5 L58.5,328.5 L58.5,337.5 Z" fill="url(#gBlue)" stroke="#000" stroke-width="1.1" stroke-linejoin="round"/><path d="M46.6,336.5 L46.6,329.6 L57.5,329.6" stroke="#d4e8ff" stroke-width="0.8" fill="none" opacity="0.9"/></svg>
</div></body></html>
